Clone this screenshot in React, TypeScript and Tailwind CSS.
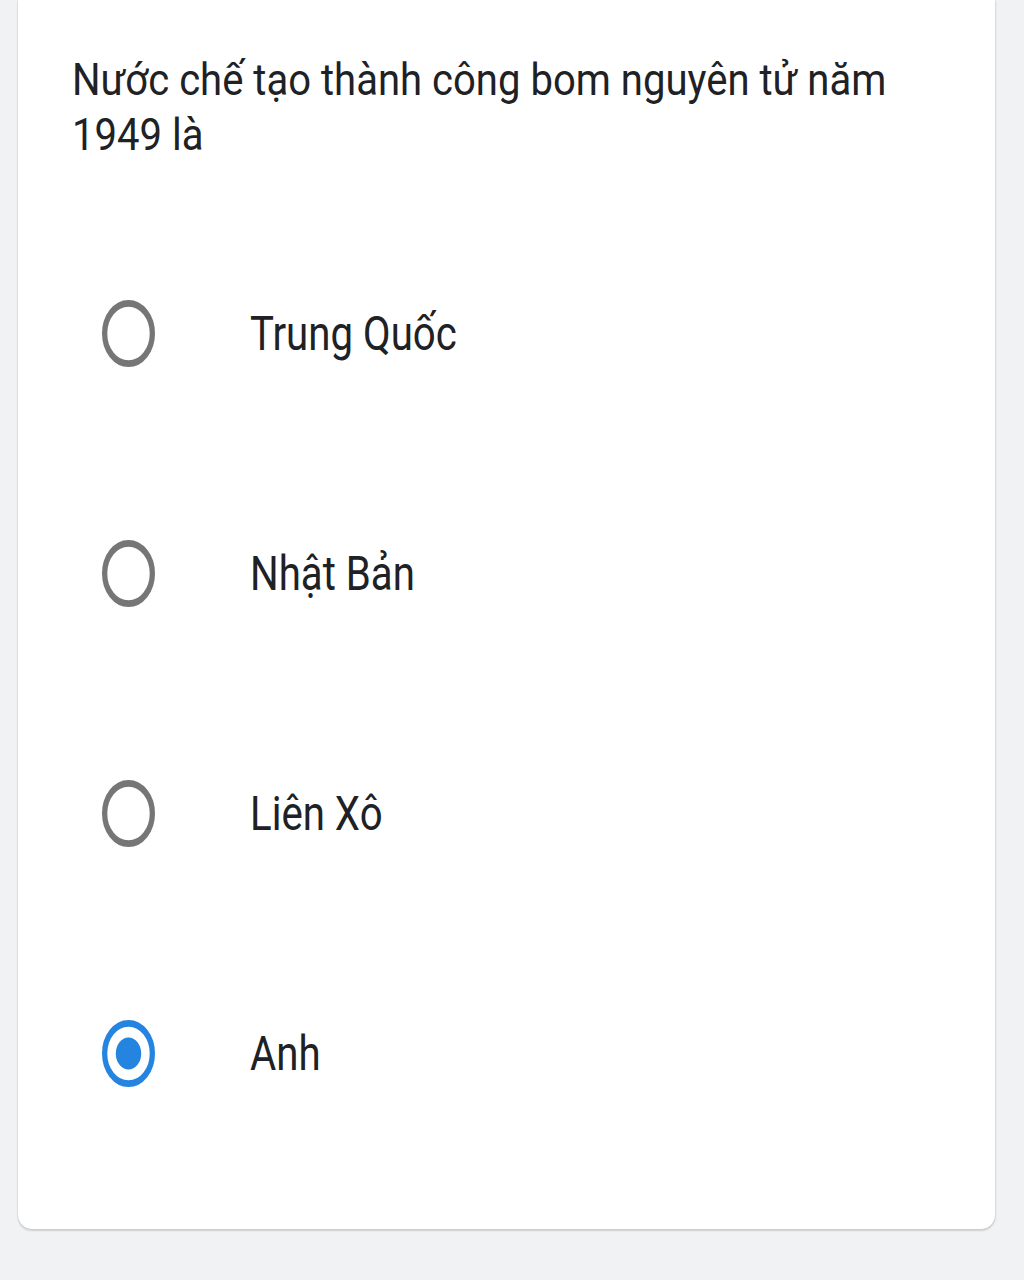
import { useState } from 'react';

const options = ['Trung Quốc', 'Nhật Bản', 'Liên Xô', 'Anh'];

function Radio({ checked }: { checked: boolean }) {
  const color = checked ? '#2584e0' : '#767676';
  return (
    <svg viewBox="0 0 20 20" preserveAspectRatio="none" className="w-[53px] h-[67px] shrink-0">
      <circle cx="10" cy="10" r="9" fill="none" stroke={color} strokeWidth="2" />
      {checked && <circle cx="10" cy="10" r="4.8" fill={color} />}
    </svg>
  );
}

export default function App() {
  const [selected, setSelected] = useState(3);

  return (
    <div className="min-h-screen bg-[#f1f2f4] font-['Roboto','Liberation_Sans',sans-serif] text-[#202124]">
      <div className="ml-[18px] w-[977px] bg-white rounded-b-[14px] shadow-[0_2px_2px_rgba(0,0,0,0.14),-1px_0_1px_rgba(0,0,0,0.05),1px_0_2px_rgba(0,0,0,0.08)] pt-[52px] pb-[56px] pl-[54px] overflow-hidden">
        <div className="w-[960px] origin-left scale-x-[0.89] text-[45px] leading-[55px]">
          Nước chế tạo thành công bom nguyên tử năm 1949 là
        </div>

        <div className="mt-[51px]">
          {options.map((opt, i) => (
            <div
              key={opt}
              onClick={() => setSelected(i)}
              className="h-[240px] flex items-center pl-[30px] cursor-pointer"
            >
              <Radio checked={selected === i} />
              <div className="ml-[95px] w-[600px] origin-left scale-x-[0.82] text-[49px] leading-none">
                {opt}
              </div>
            </div>
          ))}
        </div>
      </div>
    </div>
  );
}
